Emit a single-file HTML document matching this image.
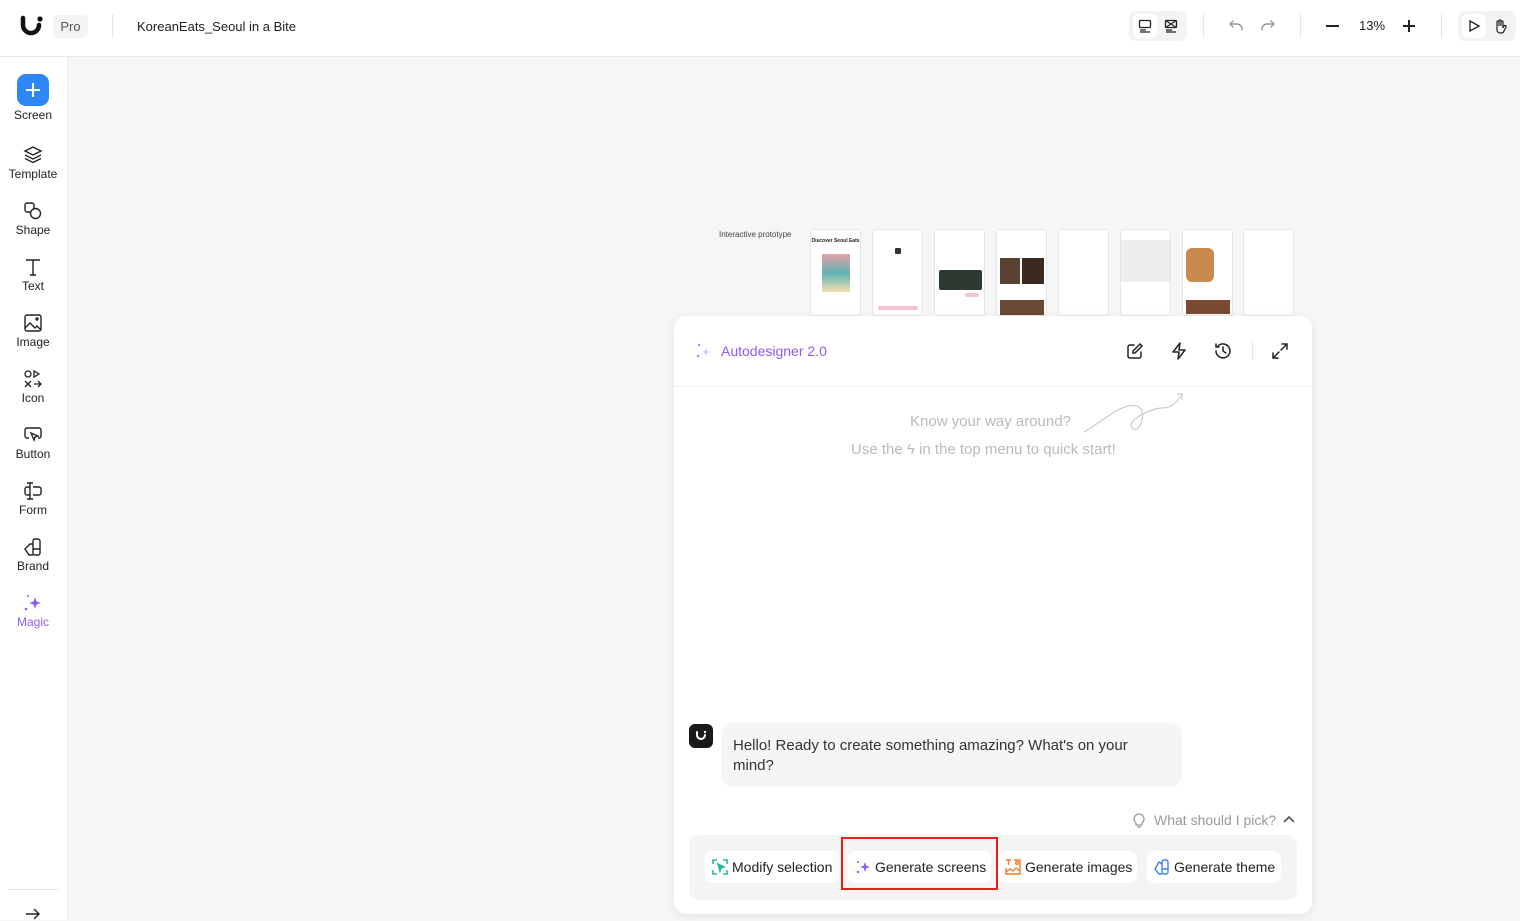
<!DOCTYPE html>
<html><head><meta charset="utf-8"><style>
*{box-sizing:border-box;margin:0;padding:0}
body{width:1520px;height:920px;overflow:hidden;background:#f6f6f6;font-family:"Liberation Sans",sans-serif;color:#222;position:relative}
.top{position:absolute;left:0;top:0;width:1520px;height:57px;background:#fff;border-bottom:1px solid #e8e8e8}
.side{position:absolute;left:0;top:57px;width:68px;height:863px;background:#fff;border-right:1px solid #ebebeb}
.si{position:absolute;left:0;width:66px;text-align:center;font-size:12px;color:#222}
.si svg{display:block;margin:0 auto 2px}
.thumb{position:absolute;top:229px;width:51px;height:87px;background:#fff;border:1px solid #e6e6e6;border-radius:3px;overflow:hidden}
.panel{position:absolute;left:674px;top:316px;width:638px;height:598px;background:#fff;border-radius:12px;box-shadow:0 2px 10px rgba(0,0,0,.08)}
.btn{position:absolute;top:851px;height:32px;background:#fff;border-radius:8px;font-size:14px;line-height:32px;padding-left:27px;color:#222}
.btn svg{position:absolute;left:7px;top:8px}
</style></head><body>
<div class="top">
  <svg style="position:absolute;left:19px;top:15px" width="26" height="22" viewBox="0 0 26 22"><path d="M4 3v7a8 8 0 0 0 16 0" fill="none" stroke="#111" stroke-width="4.5" stroke-linecap="round"/><circle cx="21" cy="4" r="2.6" fill="#111"/></svg>
  <div style="position:absolute;left:53px;top:15px;width:35px;height:23px;background:#f4f4f4;border-radius:5px;font-size:13px;color:#555;line-height:23px;text-align:center">Pro</div>
  <div style="position:absolute;left:112px;top:14px;width:1px;height:24px;background:#e6e6e6"></div>
  <div style="position:absolute;left:137px;top:19px;font-size:13px">KoreanEats_Seoul in a Bite</div>
  <div style="position:absolute;left:1129px;top:11px;width:58px;height:30px;background:#f3f3f3;border-radius:7px"></div>
  <div style="position:absolute;left:1133px;top:14px;width:24px;height:24px;background:#fff;border-radius:6px"></div>
  <svg style="position:absolute;left:1138px;top:19px" width="14" height="14" viewBox="0 0 14 14" fill="none" stroke="#222" stroke-width="1.3"><rect x="1.5" y="1.5" width="11" height="7" rx="1"/><path d="M2 11h6M2 13h10"/></svg>
  <svg style="position:absolute;left:1164px;top:19px" width="14" height="14" viewBox="0 0 14 14" fill="none" stroke="#222" stroke-width="1.3"><rect x="1.5" y="1.5" width="11" height="7" rx="1"/><path d="M1.5 1.5l11 7M12.5 1.5l-11 7M2 11h6M2 13h10"/></svg>
  <div style="position:absolute;left:1203px;top:14px;width:1px;height:24px;background:#e6e6e6"></div>
  <svg style="position:absolute;left:1228px;top:18px" width="16" height="16" viewBox="0 0 16 16" fill="none" stroke="#999" stroke-width="1.4" stroke-linecap="round"><path d="M5 3L2 6l3 3M2 6h7a5 5 0 0 1 5 5v1"/></svg>
  <svg style="position:absolute;left:1260px;top:18px" width="16" height="16" viewBox="0 0 16 16" fill="none" stroke="#999" stroke-width="1.4" stroke-linecap="round"><path d="M11 3l3 3-3 3M14 6H7a5 5 0 0 0-5 5v1"/></svg>
  <div style="position:absolute;left:1300px;top:14px;width:1px;height:24px;background:#e6e6e6"></div>
  <div style="position:absolute;left:1326px;top:25px;width:13px;height:1.6px;background:#222"></div>
  <div style="position:absolute;left:1359px;top:18px;font-size:13px">13%</div>
  <div style="position:absolute;left:1403px;top:25px;width:12px;height:1.6px;background:#222"></div>
  <div style="position:absolute;left:1408px;top:19.5px;width:1.6px;height:12px;background:#222"></div>
  <div style="position:absolute;left:1441px;top:14px;width:1px;height:24px;background:#e6e6e6"></div>
  <div style="position:absolute;left:1458px;top:11px;width:58px;height:30px;background:#f3f3f3;border-radius:7px"></div>
  <div style="position:absolute;left:1462px;top:14px;width:24px;height:24px;background:#fff;border-radius:6px"></div>
  <svg style="position:absolute;left:1467px;top:19px" width="14" height="14" viewBox="0 0 14 14" fill="none" stroke="#222" stroke-width="1.3"><path d="M3 2l9 5-9 5z"/></svg>
  <svg style="position:absolute;left:1493px;top:18px" width="14" height="16" viewBox="0 0 14 16" fill="none" stroke="#222" stroke-width="1.2"><path d="M4 9V4a1 1 0 0 1 2 0v4V3a1 1 0 0 1 2 0v5V4a1 1 0 0 1 2 0v6l1-2a1 1 0 0 1 2 1l-2 4a3 3 0 0 1-3 2H7a3 3 0 0 1-3-3z"/></svg>
</div>
<div class="side">
  <div class="si" style="top:17px"><div style="width:32px;height:32px;background:#2f86f6;border-radius:9px;margin:0 auto 2px;position:relative"><div style="position:absolute;left:9px;top:15px;width:14px;height:2px;background:#fff"></div><div style="position:absolute;left:15px;top:9px;width:2px;height:14px;background:#fff"></div></div>Screen</div>
  <div class="si" style="top:88px"><svg width="20" height="20" viewBox="0 0 20 20" fill="none" stroke="#222" stroke-width="1.4"><path d="M10 2l8 4-8 4-8-4z"/><path d="M2 10l8 4 8-4M2 13.5l8 4 8-4"/></svg>Template</div>
  <div class="si" style="top:144px"><svg width="20" height="20" viewBox="0 0 20 20" fill="none" stroke="#222" stroke-width="1.4"><rect x="2" y="2" width="9" height="9" rx="2"/><circle cx="12.5" cy="12.5" r="5" fill="#fff"/></svg>Shape</div>
  <div class="si" style="top:200px"><svg width="20" height="20" viewBox="0 0 20 20" fill="none" stroke="#222" stroke-width="1.4"><path d="M3 3h14M10 3v15M7 18h6"/></svg>Text</div>
  <div class="si" style="top:256px"><svg width="20" height="20" viewBox="0 0 20 20" fill="none" stroke="#222" stroke-width="1.4"><rect x="2" y="2" width="16" height="16" rx="2"/><path d="M2 15l5-5 5 5 2-2 4 4"/><circle cx="14" cy="6" r="1"/></svg>Image</div>
  <div class="si" style="top:312px"><svg width="20" height="20" viewBox="0 0 20 20" fill="none" stroke="#222" stroke-width="1.3"><circle cx="5" cy="5" r="3"/><path d="M11 2v6l5-3z M2 12l6 6M8 12l-6 6M11 15h7M15 12l3 3-3 3"/></svg>Icon</div>
  <div class="si" style="top:368px"><svg width="20" height="20" viewBox="0 0 20 20" fill="none" stroke="#222" stroke-width="1.4"><path d="M6 13H4a2 2 0 0 1-2-2V5a2 2 0 0 1 2-2h12a2 2 0 0 1 2 2v6a2 2 0 0 1-2 2h-1"/><path d="M8 8l7 3-3 1-1 3z"/></svg>Button</div>
  <div class="si" style="top:424px"><svg width="20" height="20" viewBox="0 0 20 20" fill="none" stroke="#222" stroke-width="1.4"><path d="M7 2v16M4 2h6M4 18h6M7 6H4a2 2 0 0 0-2 2v4a2 2 0 0 0 2 2h3M10 6h6a2 2 0 0 1 2 2v4a2 2 0 0 1-2 2h-6"/></svg>Form</div>
  <div class="si" style="top:480px"><svg width="20" height="20" viewBox="0 0 20 20" fill="none" stroke="#222" stroke-width="1.4"><rect x="10" y="2" width="7" height="16" rx="2"/><path d="M10 7H7l-5 5 4 6h4M10 12h7"/></svg>Brand</div>
  <div class="si" style="top:536px;color:#8b5cf6"><svg width="20" height="20" viewBox="0 0 20 20" fill="#8b5cf6"><path d="M12 4l1.5 4.5L18 10l-4.5 1.5L12 16l-1.5-4.5L6 10l4.5-1.5z"/><circle cx="5" cy="3" r="1"/><circle cx="3" cy="16" r="1.3"/></svg>Magic</div>
  <svg style="position:absolute;left:25px;top:850px" width="16" height="14" viewBox="0 0 16 14" fill="none" stroke="#222" stroke-width="1.4"><path d="M1 7h13M9 2l5 5-5 5"/></svg>
  <div style="position:absolute;left:8px;top:832px;width:50px;height:1px;background:#e6e6e6"></div>
</div>
<div style="position:absolute;left:719px;top:230px;font-size:8px;color:#444">Interactive prototype</div>
<div class="thumb" style="left:810px"><div style="font-size:5px;text-align:center;margin-top:8px;font-weight:bold">Discover Seoul Eats</div><div style="margin:10px auto 0;width:28px;height:38px;background:linear-gradient(#e9a0a8,#5fb3b3 50%,#f3e0b0)"></div></div>
<div class="thumb" style="left:872px"><div style="margin:18px auto 0;width:6px;height:6px;background:#333;border-radius:1px"></div><div style="position:absolute;left:5px;top:76px;width:40px;height:4px;background:#f8c3d0;border-radius:2px"></div></div>
<div class="thumb" style="left:934px"><div style="position:absolute;left:4px;top:40px;width:43px;height:20px;background:#2e3a30;border-radius:2px"></div><div style="position:absolute;left:30px;top:63px;width:14px;height:4px;background:#f8c3d0;border-radius:2px"></div></div>
<div class="thumb" style="left:996px"><div style="position:absolute;left:3px;top:28px;width:20px;height:26px;background:#5a4030"></div><div style="position:absolute;left:25px;top:28px;width:22px;height:26px;background:#3b2a20"></div><div style="position:absolute;left:3px;top:70px;width:44px;height:17px;background:#6b4a35"></div></div>
<div class="thumb" style="left:1058px"></div>
<div class="thumb" style="left:1120px"><div style="position:absolute;left:0;top:10px;width:51px;height:42px;background:#eeeeee"></div></div>
<div class="thumb" style="left:1182px"><div style="position:absolute;left:3px;top:18px;width:28px;height:34px;background:#c98a50;border-radius:6px"></div><div style="position:absolute;left:3px;top:70px;width:44px;height:14px;background:#7a4a30"></div></div>
<div class="thumb" style="left:1243px"></div>
<div class="panel">
  <svg style="position:absolute;left:21px;top:26px" width="16" height="18" viewBox="0 0 16 18" fill="#a78bfa"><path d="M11 6l1 3 3 1-3 1-1 3-1-3-3-1 3-1z" opacity=".5"/><circle cx="4" cy="3" r="1.2"/><circle cx="3" cy="14" r="1.3"/></svg>
  <div style="position:absolute;left:47px;top:27px;font-size:14px;color:#8b5cf6">Autodesigner 2.0</div>
  <svg style="position:absolute;left:452px;top:26px" width="18" height="18" viewBox="0 0 18 18" fill="none" stroke="#222" stroke-width="1.5" stroke-linecap="round"><path d="M8 3H4a2 2 0 0 0-2 2v9a2 2 0 0 0 2 2h9a2 2 0 0 0 2-2v-4"/><path d="M14 2l2 2-7 7H7V9z"/></svg>
  <svg style="position:absolute;left:497px;top:26px" width="16" height="18" viewBox="0 0 16 18" fill="none" stroke="#222" stroke-width="1.5" stroke-linejoin="round"><path d="M9 1L2 10h6l-1 7 7-9H8z"/></svg>
  <svg style="position:absolute;left:540px;top:26px" width="18" height="18" viewBox="0 0 18 18" fill="none" stroke="#222" stroke-width="1.5" stroke-linecap="round"><path d="M2 9a7 7 0 1 0 2-5M2 2v3h3M9 5v4l3 2"/></svg>
  <div style="position:absolute;left:578px;top:26px;width:1px;height:18px;background:#e6e6e6"></div>
  <svg style="position:absolute;left:597px;top:26px" width="18" height="18" viewBox="0 0 18 18" fill="none" stroke="#222" stroke-width="1.5" stroke-linecap="round"><path d="M11 2h5v5M16 2l-6 6M7 16H2v-5M2 16l6-6"/></svg>
  <div style="position:absolute;left:0;top:70px;width:638px;height:1px;background:#eee"></div>
  <div style="position:absolute;left:236px;top:97px;font-size:15px;color:#bbb">Know your way around?</div>
  <div style="position:absolute;left:177px;top:125px;font-size:15px;color:#bbb">Use the <span style="color:#bbb">ϟ</span> in the top menu to quick start!</div>
  <svg style="position:absolute;left:408px;top:76px" width="105" height="45" viewBox="0 0 105 45" fill="none" stroke="#ccc" stroke-width="1.2"><path d="M2 40C20 30 40 10 55 14c12 4 2 30-5 22-6-8 20-20 30-20 8 0 15-5 20-14M95 2l5 0 0 6"/></svg>
  <div style="position:absolute;left:15px;top:408px;width:24px;height:24px;background:#1a1a1a;border-radius:6px"><svg style="position:absolute;left:6px;top:6px" width="12" height="11" viewBox="0 0 12 11"><path d="M2 2v3a4 4 0 0 0 8 0" fill="none" stroke="#fff" stroke-width="2" stroke-linecap="round"/><circle cx="10" cy="2" r="1.2" fill="#fff"/></svg></div>
  <div style="position:absolute;left:47px;top:407px;width:461px;height:64px;background:#f5f5f5;border-radius:12px;padding:13px 12px;font-size:15px;line-height:20px;color:#333">Hello! Ready to create something amazing? What's on your mind?</div>
  <svg style="position:absolute;left:458px;top:495px" width="14" height="18" viewBox="0 0 14 18" fill="none" stroke="#999" stroke-width="1.3"><path d="M4 12a5 5 0 1 1 6 0v2H4zM5 16h4"/></svg>
  <div style="position:absolute;left:480px;top:496px;font-size:14px;color:#999">What should I pick?</div>
  <svg style="position:absolute;left:608px;top:498px" width="14" height="10" viewBox="0 0 14 10" fill="none" stroke="#555" stroke-width="1.6"><path d="M2 8l5-5 5 5"/></svg>
  <div style="position:absolute;left:15px;top:519px;width:608px;height:65px;background:#f4f4f4;border-radius:10px"></div>
</div>
<div class="btn" style="left:705px;width:134px"><svg width="16" height="16" viewBox="0 0 16 16" fill="none" stroke="#2bb5a5" stroke-width="1.6"><path d="M1 5V1h4M11 1h4v4M15 11v4h-4M5 15H1v-4"/><path d="M6 5l6 3-3 1-1 3z" fill="#2bb5a5"/></svg>Modify selection</div>
<div class="btn" style="left:848px;width:143px"><svg width="16" height="16" viewBox="0 0 16 16" fill="#8b5cf6"><path d="M10 3l1.3 3.7L15 8l-3.7 1.3L10 13l-1.3-3.7L5 8l3.7-1.3z"/><circle cx="3" cy="3" r="1"/><circle cx="3" cy="13" r="1.2"/></svg>Generate screens</div>
<div style="position:absolute;left:841px;top:837px;width:157px;height:53px;border:2px solid #e8201a"></div>
<div class="btn" style="left:998px;width:139px"><svg width="16" height="16" viewBox="0 0 16 16" fill="none" stroke="#f07b2a" stroke-width="1.4"><path d="M1 1h5M3.5 1v5M9 1h6v14H1V9M1 13l4-3 3 2 3-3 4 3"/><circle cx="12" cy="4" r="1.3"/></svg>Generate images</div>
<div class="btn" style="left:1147px;width:134px"><svg width="16" height="16" viewBox="0 0 16 16" fill="none" stroke="#3b82f6" stroke-width="1.4"><rect x="8" y="1" width="6" height="14" rx="2"/><path d="M8 5L5 3 1 10l4 5h3M8 10h6"/></svg>Generate theme</div>
</body></html>
